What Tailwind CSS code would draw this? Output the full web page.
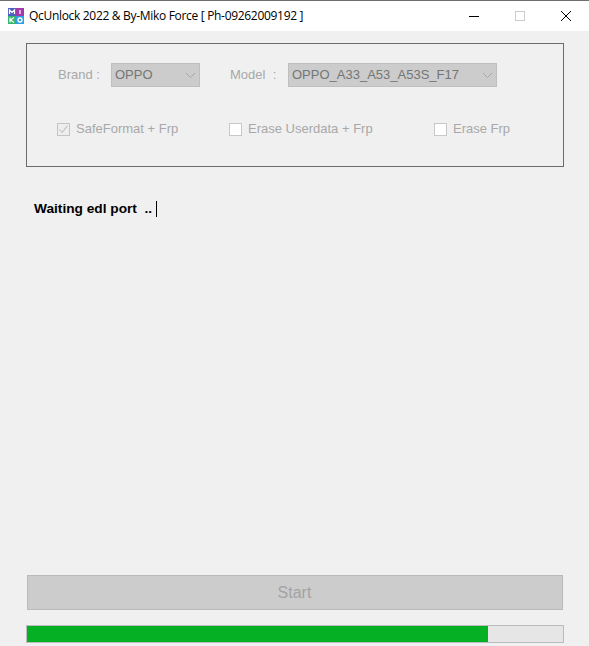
<!DOCTYPE html>
<html lang="en">
<head>
    <meta charset="UTF-8">
    <title>QcUnlock 2022</title>
    <script src="https://cdn.jsdelivr.net/npm/@tailwindcss/browser@4"></script>
</head>
<body class="w-[589px] h-[646px] overflow-hidden bg-[#f0f0f0] font-['Liberation_Sans',sans-serif]">
    <!-- Title bar -->
    <div class="h-[31px] bg-white border-t border-[#6e6e6e] flex items-center">
        <svg class="ml-2 w-4 h-4 shrink-0" viewBox="0 0 16 16">
            <rect x="0" y="0" width="8" height="8" fill="#4a5fc1"/>
            <rect x="8" y="0" width="8" height="8" fill="#a23ba8"/>
            <rect x="0" y="8" width="8" height="8" fill="#35b56a"/>
            <rect x="8" y="8" width="8" height="8" fill="#2f9fe0"/>
            <path d="M1.5 6V2L4 4.5 6.5 2V6M12 2V6M2 9.5V14.5M6 9.5L2.5 12 6 14.5" fill="none" stroke="#fff" stroke-width="1.2"/>
            <circle cx="12" cy="12" r="2" fill="none" stroke="#fff" stroke-width="1.3"/>
        </svg>
        <span class="ml-[5px] text-[12px] tracking-[-0.31px] text-black whitespace-nowrap font-['Open_Sans',sans-serif]">QcUnlock 2022 &amp; By-Miko Force [ Ph-09262009192 ]</span>
        <div class="ml-auto flex items-center">
            <svg class="w-[46px] h-[30px]" viewBox="0 0 46 30"><path d="M18 15.5H28" stroke="#000" stroke-width="1"/></svg>
            <svg class="w-[46px] h-[30px]" viewBox="0 0 46 30"><rect x="18.5" y="10.5" width="9" height="9" fill="none" stroke="#cccccc"/></svg>
            <svg class="w-[46px] h-[30px]" viewBox="0 0 46 30"><path d="M18 10L28 20M28 10L18 20" stroke="#000" stroke-width="1"/></svg>
        </div>
    </div>

    <!-- Options group -->
    <div class="mt-3 ml-[26px] w-[538px] h-[124px] border border-[#6b6b6b] text-[13px] text-[#a8a8a8]">
        <div class="flex items-center mt-[19px] h-6">
            <span class="ml-[31px] w-[53px]">Brand :</span>
            <div class="w-[89px] h-6 bg-[#cccccc] border border-[#bfbfbf] flex items-center justify-between pl-[3px] pr-[3px] text-[#757575]">
                <span>OPPO</span>
                <svg class="w-[11px] h-[7px]" viewBox="0 0 11 7"><path d="M1 1L5.5 5.5 10 1" fill="none" stroke="#a6a6a6"/></svg>
            </div>
            <span class="ml-[30px] w-[58px] whitespace-pre">Model  :</span>
            <div class="w-[209px] h-6 bg-[#cccccc] border border-[#bfbfbf] flex items-center justify-between pl-[3px] pr-[3px] text-[#757575]">
                <span>OPPO_A33_A53_A53S_F17</span>
                <svg class="w-[11px] h-[7px]" viewBox="0 0 11 7"><path d="M1 1L5.5 5.5 10 1" fill="none" stroke="#a6a6a6"/></svg>
            </div>
        </div>
        <div class="flex items-center mt-[32px] h-5">
            <div class="ml-[30px] w-[13px] h-[13px] bg-[#eeeeee] border border-[#c4c4c4] flex items-center justify-center">
                <svg class="w-[11px] h-[11px]" viewBox="0 0 11 11"><path d="M1.5 5.5L4.2 8.5 9.5 1.5" fill="none" stroke="#b5b5b5"/></svg>
            </div>
            <span class="ml-[6px] w-[153px]">SafeFormat + Frp</span>
            <div class="w-[13px] h-[13px] bg-white border border-[#c8c8c8]"></div>
            <span class="ml-[6px] w-[186px]">Erase Userdata + Frp</span>
            <div class="w-[13px] h-[13px] bg-white border border-[#c8c8c8]"></div>
            <span class="ml-[6px]">Erase Frp</span>
        </div>
    </div>

    <!-- Status -->
    <div class="mt-[34px] ml-[34px] h-4 flex items-center text-[13.7px] font-bold text-black whitespace-pre">
        <span>Waiting edl port  ..</span>
        <div class="ml-[4px] w-px h-4 bg-black"></div>
    </div>

    <!-- Start button -->
    <div class="mt-[358px] ml-[27px] w-[536px] h-[35px] bg-[#cccccc] border border-[#bababa] flex items-center justify-center pr-px text-[16px] text-[#a3a3a3]">Start</div>

    <!-- Progress -->
    <div class="mt-[15px] ml-[26px] w-[538px] h-[18px] bg-[#e6e6e6] border border-[#bcbcbc]">
        <div class="h-full w-[461px] bg-[#06b025]"></div>
    </div>
</body>
</html>
